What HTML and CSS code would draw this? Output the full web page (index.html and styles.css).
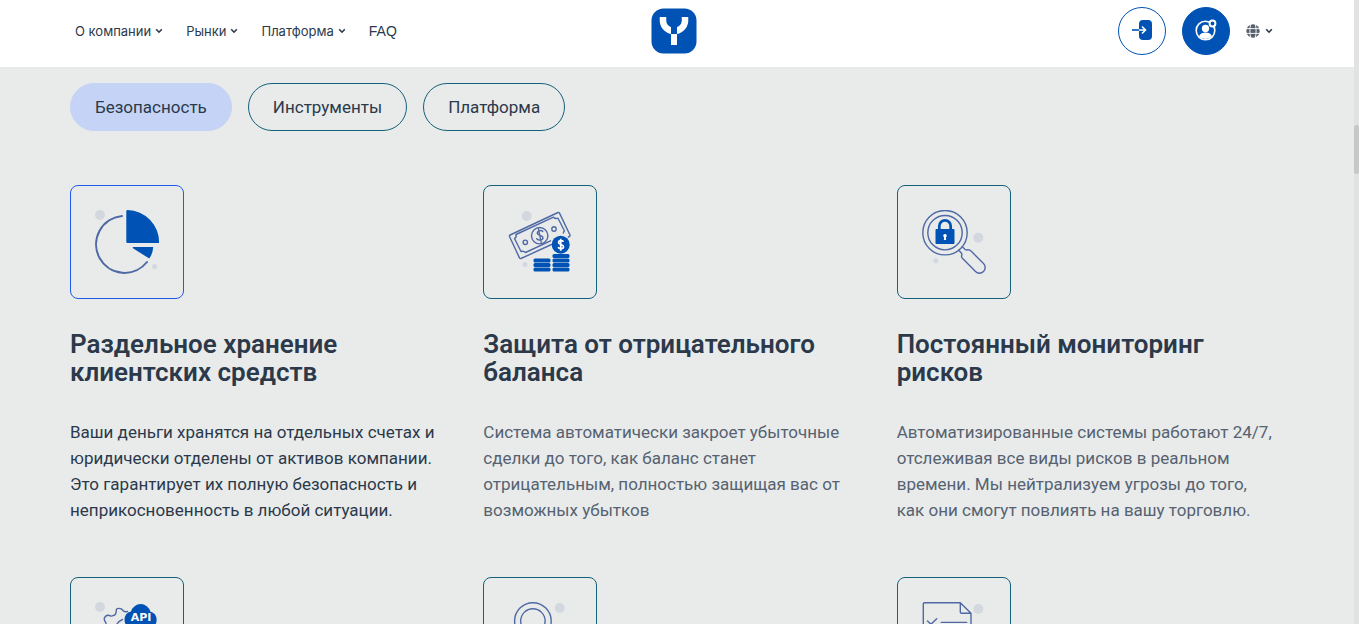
FILE: index.html
```html
<!DOCTYPE html>
<html lang="ru">
<head>
    <meta charset="UTF-8">
    <meta name="viewport" content="width=device-width, initial-scale=1.0">
    <title>Безопасность</title>
    <link rel="stylesheet" href="styles.css">
</head>
<body>
    <header class="header">
        <nav class="nav">
            <a href="#about">О компании <svg class="chevron" viewBox="0 0 8 6"><path d="M1.2 1.2 4 4.2 6.8 1.2"/></svg></a>
            <a href="#markets">Рынки <svg class="chevron" viewBox="0 0 8 6"><path d="M1.2 1.2 4 4.2 6.8 1.2"/></svg></a>
            <a href="#platform">Платформа <svg class="chevron" viewBox="0 0 8 6"><path d="M1.2 1.2 4 4.2 6.8 1.2"/></svg></a>
            <a class="latin" href="#faq">FAQ</a>
        </nav>

        <a class="logo" href="#home" aria-label="На главную">
            <svg viewBox="0 0 46 46">
                <rect x="0.5" y="0.5" width="45" height="45" rx="12" fill="#0052b4"/>
                <path d="M12 9v4.500a11 10.500 0 0 0 11 9.500a11 10.500 0 0 0 11-9.500V9" fill="none" stroke="#fff" stroke-width="6.500"/>
                <path d="M20 9h6v17h-6z" fill="#0052b4"/>
                <path d="M20 26h6v11h-6z" fill="#fff"/>
            </svg>
        </a>

        <div class="actions">
            <a class="round-btn" href="#login" aria-label="Войти">
                <svg viewBox="0 0 22 22">
                    <rect x="8" y="1" width="13" height="20" rx="4" fill="#0052b4"/>
                    <path d="M1 11h8" stroke="#0052b4" stroke-width="1.600"/>
                    <path d="M8 11h6M11 7.500 14.500 11 11 14.500" fill="none" stroke="#fff" stroke-width="1.600"/>
                </svg>
            </a>
            <a class="round-btn round-btn-filled" href="#register" aria-label="Регистрация">
                <svg viewBox="0 0 22 22">
                    <circle cx="10.500" cy="11.500" r="9.300" fill="none" stroke="#fff" stroke-width="1.600"/>
                    <circle cx="10.500" cy="9.500" r="3.700" fill="#fff"/>
                    <path d="M4 17.200c1.200-2.800 3.500-3.700 6.500-3.700s5.300.9 6.500 3.700a9 9 0 0 1-13 0z" fill="#fff"/>
                    <circle cx="17.500" cy="4.500" r="2.900" fill="#0052b4" stroke="#fff" stroke-width="2"/>
                </svg>
            </a>
            <button class="lang" type="button" aria-label="Язык">
                <svg class="globe" viewBox="0 0 14 14">
                    <circle cx="7" cy="7" r="6.700" fill="#56616d"/>
                    <path d="M0 4.600h14M0 9.400h14M4.800 0c-1.200 4-1.200 10 0 14M9.200 0c1.200 4 1.200 10 0 14" fill="none" stroke="#fff" stroke-width=".9"/>
                </svg>
                <svg class="chevron" viewBox="0 0 8 6"><path d="M1.2 1.2 4 4.2 6.8 1.2"/></svg>
            </button>
        </div>
    </header>

    <main class="container">
        <div class="tabs">
            <button class="tab tab-active" type="button">Безопасность</button>
            <button class="tab" type="button">Инструменты</button>
            <button class="tab" type="button">Платформа</button>
        </div>

        <div class="cards">
            <article class="card card-active">
                <div class="icon">
                    <svg viewBox="0 0 64 64">
                        <circle class="dot" cx="5" cy="5" r="5"/>
                        <circle class="dot" cx="59.500" cy="56.500" r="2.500"/>
                        <path class="line thick" d="M27 6A28.500 28.500 0 1 0 52 52"/>
                        <path class="solid" d="M32.500 0A32 32 0 0 1 64 33H32.500a1.200 1.200 0 0 1-1.200-1.200V1.200A1.200 1.200 0 0 1 32.500 0z"/>
                        <path class="solid" d="M38 37h20.200q-.4 6.500-3.900 11.600L37.600 38z"/>
                    </svg>
                </div>
                <h2>Раздельное хранение клиентских средств</h2>
                <p>Ваши деньги хранятся на отдельных счетах и юридически отделены от активов компании. Это гарантирует их полную безопасность и неприкосновенность в любой ситуации.</p>
            </article>

            <article class="card">
                <div class="icon">
                    <svg viewBox="0 0 64 64">
                        <circle class="dot" cx="18.700" cy="6" r="5"/>
                        <circle class="dot" cx="17" cy="54.500" r="2.500"/>
                        <!-- banknote -->
                        <path class="line" d="M43.500 34.500 13 48.500q-1 .4-1.500-.6L1.500 26.500q-.4-1 .6-1.500L50 2.500q1-.4 1.500.6L62 25q.3 1-.6 1.500l-1 .5"/>
                        <path class="line" d="M42.500 30.800 17.500 42.500q-1.800-2-4.500-1L6.500 28.500q2.500-1.500 1.500-4L45.500 7.200q1.800 2 4.500 1L56.500 21q-1 .7-1.200 2"/>
                        <circle class="line" cx="31.700" cy="25.700" r="8.200"/>
                        <path class="line" d="M34.800 21.500c-1.500-1.800-5.600-.7-5.600 1.600 0 2.700 5.800 1.700 5.800 4.700 0 2.600-4.500 3-6.300 1M30.400 18.700l2.800 13.600"/>
                        <circle class="line" cx="17.300" cy="32.300" r="2.200"/>
                        <circle class="line" cx="46" cy="19" r="2.200"/>
                        <!-- coins -->
                        <circle class="solid" cx="52.700" cy="34.700" r="9"/>
                        <path d="M55.500 31.700c-1.300-1.600-5-1.300-5 .8 0 2.500 5 1.500 5 4.200 0 2.400-4.100 2.500-5.500.5M52.700 28.700v12" fill="none" stroke="#fff" stroke-width="1.700"/>
                        <g class="solid">
                            <rect x="44.500" y="44" width="17" height="4" rx="1.500"/>
                            <rect x="44.500" y="48.500" width="17" height="4" rx="1.500"/>
                            <rect x="44.500" y="53" width="17" height="4" rx="1.500"/>
                            <rect x="44.500" y="57.500" width="17" height="4" rx="1.500"/>
                            <rect x="25.500" y="48.500" width="17" height="4" rx="1.500"/>
                            <rect x="25.500" y="53" width="17" height="4" rx="1.500"/>
                            <rect x="25.500" y="57.500" width="17" height="4" rx="1.500"/>
                        </g>
                    </svg>
                </div>
                <h2>Защита от отрицательного баланса</h2>
                <p>Система автоматически закроет убыточные сделки до того, как баланс станет отрицательным, полностью защищая вас от возможных убытков</p>
            </article>

            <article class="card">
                <div class="icon">
                    <svg viewBox="0 0 64 64">
                        <circle class="dot" cx="56.300" cy="27.700" r="5"/>
                        <circle class="dot" cx="13.700" cy="50.700" r="2.500"/>
                        <circle class="line" cx="23" cy="22.700" r="22.200"/>
                        <circle class="line" cx="23" cy="22.700" r="17.200"/>
                        <path class="line" d="M36.800 40.200 39.300 43q1 1.200.4 2.300-.6 1.700.7 3L53.500 61.600a5.600 5.600 0 0 0 8-8L49.300 41.300q-1.800-2-4-1.500-1.800.5-2.600-.8L40.300 36.700"/>
                        <path d="M17.300 19.500V16a5.700 5.700 0 0 1 11.400 0v3.500" fill="none" stroke="#0052b4" stroke-width="2.700"/>
                        <rect class="solid" x="13.500" y="19" width="19" height="15" rx="1"/>
                        <circle cx="23" cy="25.700" r="1.800" fill="#fff"/>
                        <path d="M22.200 26h1.600l.3 4h-2.200z" fill="#fff"/>
                    </svg>
                </div>
                <h2>Постоянный мониторинг рисков</h2>
                <p>Автоматизированные системы работают 24/7, отслеживая все виды рисков в реальном времени. Мы нейтрализуем угрозы до того, как они смогут повлиять на вашу торговлю.</p>
            </article>

            <article class="card">
                <div class="icon">
                    <svg viewBox="0 0 64 64">
                        <circle class="dot" cx="5" cy="5" r="5"/>
                        <path class="line" d="M32.500 9.500q-2.800 1-4.500-1-2-3-5.800-1.800-1.200.5-1 3-.2 3-3 4-2.500 1-4.700-.5-3.200-.2-4.300 3.300 0 2 1.300 3.500 1.500 3-1.500 5.500"/>
                        <path class="line" d="M27.500 17.500q-5 2-7 7.500"/>
                        <path class="solid" d="M36 9.500a10 10 0 0 1 19.300 0 8.700 8.700 0 0 1 .7 16.500H36a8.500 8.500 0 0 1 0-16.500z"/>
                        <text class="api" x="46" y="18.500">API</text>
                    </svg>
                </div>
            </article>

            <article class="card">
                <div class="icon">
                    <svg viewBox="0 0 64 64">
                        <circle class="dot" cx="51.700" cy="6" r="5"/>
                        <circle class="line" cx="24.900" cy="19" r="18.300"/>
                        <circle class="line" cx="24.900" cy="19" r="12.200"/>
                    </svg>
                </div>
            </article>

            <article class="card">
                <div class="icon">
                    <svg viewBox="0 0 64 64">
                        <circle class="dot" cx="56.300" cy="7" r="5"/>
                        <path class="line" d="M1.300 64V2q0-1.300 1.300-1.300h35.700l10.700 10.600V64M38.300.7v9.300q0 1.300 1.300 1.300H49"/>
                        <path class="line" d="M5.500 19l3.500 3.300 5.700-5.500M19.300 20.400h25.400"/>
                    </svg>
                </div>
            </article>
        </div>
    </main>

    <div class="scrollbar"><div class="scrollbar-thumb"></div></div>
</body>
</html>
```
FILE: styles.css
```css
* {
    box-sizing: border-box;
}

body {
    margin: 0;
    height: 100vh;
    overflow: hidden;
    padding-right: 5px;
    background: #e8ebea;
    color: #2b394b;
    font-family: Roboto, "Noto Sans", sans-serif;
}

.header {
    display: grid;
    grid-template-columns: 1fr auto 1fr;
    align-items: center;
    height: 67px;
    padding: 0 81px 5px 75px;
    background: #fff;
}

.nav {
    display: flex;
    gap: 23px;
}

.nav a {
    display: flex;
    align-items: center;
    gap: 4px;
    color: inherit;
    font-family: Inter, sans-serif;
    font-size: 13px;
    line-height: 20px;
    text-decoration: none;
}

.nav .latin {
    font-family: "Liberation Sans", Arial, sans-serif;
    font-size: 14px;
}

.chevron {
    width: 8px;
    height: 6px;
    fill: none;
    stroke: #2b394b;
    stroke-width: 1.6;
}

.logo svg {
    display: block;
    width: 46px;
    height: 46px;
}

.actions {
    display: flex;
    justify-content: flex-end;
    align-items: center;
    gap: 16px;
}

.round-btn {
    display: flex;
    align-items: center;
    justify-content: center;
    width: 48px;
    height: 48px;
    border: 1px solid #0052b4;
    border-radius: 50%;
}

.round-btn svg {
    width: 22px;
    height: 22px;
    margin-bottom: 2px;
}

.round-btn-filled {
    background: #0052b4;
}

.lang {
    display: flex;
    align-items: center;
    gap: 5px;
    padding: 0;
    border: none;
    background: none;
}

.globe {
    width: 14px;
    height: 14px;
}

.container {
    padding: 16px 70px;
}

.tabs {
    display: flex;
    gap: 16px;
}

.tab {
    height: 48px;
    padding: 0 24px;
    border: 1px solid #16607a;
    border-radius: 24px;
    background: none;
    color: inherit;
    font-family: inherit;
    font-size: 17px;
}

.tab-active {
    border-color: #c5d4f6;
    background: #c5d4f6;
}

.cards {
    display: grid;
    grid-template-columns: repeat(3, 1fr);
    gap: 54px 26px;
    margin-top: 54px;
}

.icon {
    width: 114px;
    height: 114px;
    padding: 24px;
    border: 1px solid #16607a;
    border-radius: 8px;
}

.icon svg {
    display: block;
    width: 64px;
    height: 64px;
}

.card h2 {
    max-width: 350px;
    margin: 31px 0 33px;
    font-size: 26px;
    font-weight: 600;
    line-height: 28px;
}

.card p {
    max-width: 378px;
    margin: 0;
    color: #566271;
    font-size: 17px;
    line-height: 26px;
}

.card-active .icon {
    border-color: #1f5aea;
}

.card-active p {
    color: #2b394b;
}

/* icon parts */
.dot {
    fill: #d3d8df;
}

.line {
    fill: none;
    stroke: #5069a5;
    stroke-width: 1.4;
    stroke-linecap: round;
    stroke-linejoin: round;
}

.thick {
    stroke-width: 2;
}

.solid {
    fill: #0052b4;
}

.api {
    fill: #fff;
    font: bold 11px "DejaVu Sans", sans-serif;
    text-anchor: middle;
}

.scrollbar {
    position: fixed;
    top: 0;
    right: 0;
    bottom: 0;
    width: 5px;
    background: #e1e3e2;
}

.scrollbar-thumb {
    height: 49px;
    margin-top: 125px;
    border-radius: 3px;
    background: #c6c8c8;
}
```
